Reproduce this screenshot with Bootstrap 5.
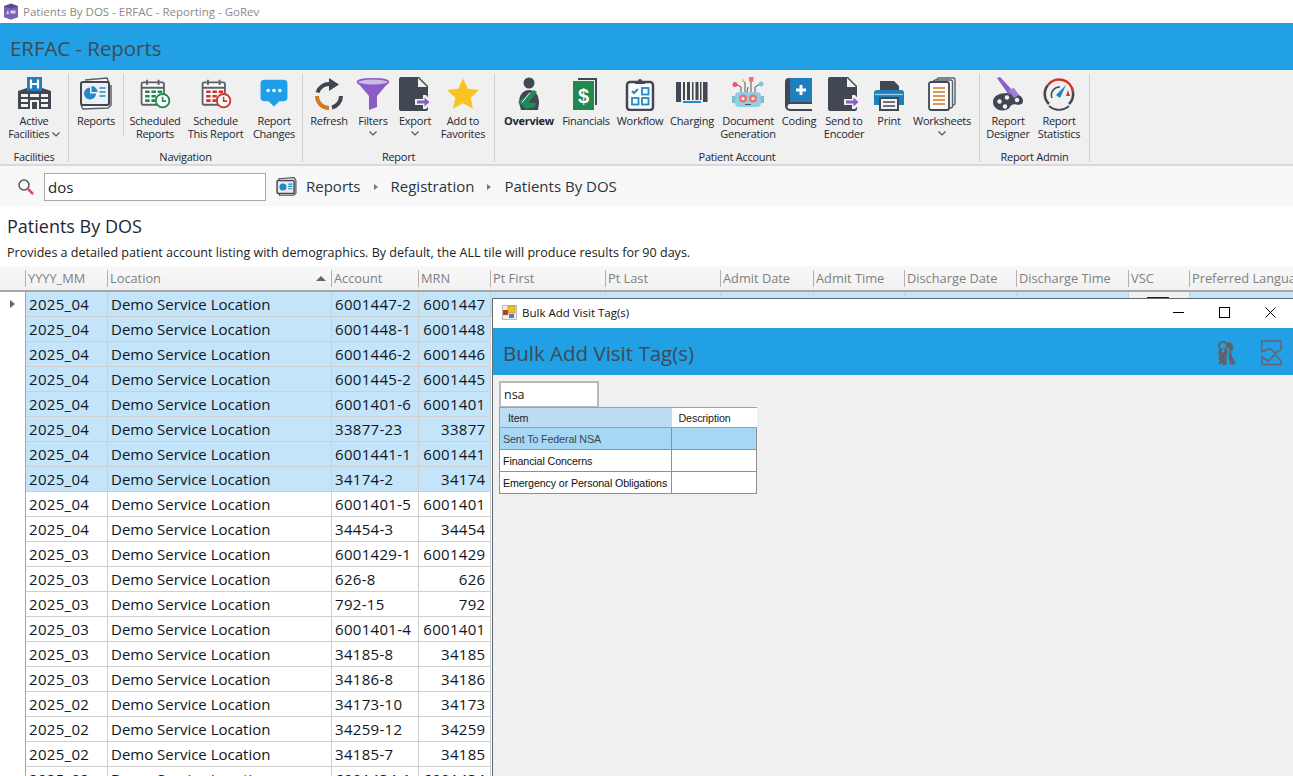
<!DOCTYPE html>
<html lang="en">
<head>
<meta charset="utf-8">
<title>Patients By DOS - ERFAC - Reporting - GoRev</title>
<link rel="stylesheet" href="https://cdn.jsdelivr.net/npm/bootstrap@5.3.0/dist/css/bootstrap.min.css">
<style>
html,body{height:776px;overflow:hidden}
body{font-family:"Open Sans","Noto Sans",sans-serif;background:#fff;color:#000;position:relative;width:1293px}
.wintitle{height:23px;font-size:11.5px;color:#8a8a8a;padding-left:3px;gap:4px}
.apphead{height:47px;background:#22a0e6;color:#3f4a54;font-size:20.4px;padding:4px 0 0 10px}
.ribbon{height:96px;background:#f0f0f0;border-bottom:2px solid #d9d9d9;font-size:11px;letter-spacing:-.25px;color:#1c2733;line-height:13px}
.rgroup{height:88px;margin-top:4px;border-right:1px solid #d0d0d0;position:relative}
.rbtns{height:76px}
.rlabel{text-align:center;height:12px;color:#1c2733}
.g3 .rlabel,.g5 .rlabel{margin-left:-3px}
.g4 .rlabel{margin-left:-5px}
.rbtn{text-align:center;padding-top:3px;flex:none}
.rbtn svg{display:block;margin:0 auto 3px;width:34px;height:34px}
.rbtn svg.chev{display:block;margin:4px auto 0;width:8px;height:5px}
.rbtn svg.chevin{display:inline;margin:0;width:8px;height:5px;vertical-align:1px}
.rsplit{border-right:1px solid #d0d0d0;height:62px;flex:none}
.g1{width:69px}.g2{width:234px}.g3{width:192px}.g4{width:485px}.g5{width:110px}
.pl3px{padding-left:3px}.pl5px{padding-left:5px}
.w42{width:42px}.w46{width:46px}.w48{width:48px}.w50{width:50px}.w52{width:52px}.w54{width:54px}.w56{width:56px}.w58{width:58px}.w59{width:59px}.w60{width:60px}.w62{width:62px}.w64{width:64px}.w68{width:68px}
.searchbar{height:40px;background:#f8f8f8;font-size:15px;color:#2a3440;padding:1px 0 0 17px}
.searchbox{width:222px;height:28px;border:1px solid #a9a9a9;background:#fff;padding:2px 3px 0;font-size:15px;margin-left:9px;margin-right:10px;color:#1c2733}
.crumb-sep{width:0;height:0;border-left:4px solid #777;border-top:3px solid transparent;border-bottom:3px solid transparent;margin:0 13px}
.crumbtext{margin-left:9px}
.pagehead{padding:8px 0 0 7px;height:60px;background:#fff}
.pagetitle{font-size:18px;line-height:24px;color:#1c2733}
.pagedesc{font-size:12.55px;line-height:16px;margin-top:7px;color:#222}
.gridwrap{width:1293px;overflow:hidden;flex:1 1 auto;min-height:0}
.dgrid{table-layout:fixed;width:1320px;border-collapse:collapse;margin:0;font-size:15px;--bs-table-bg:transparent}
.dgrid th{height:25px;background:linear-gradient(#f9f9f9,#f1f1f1);color:#808080;font-weight:400;font-size:12.8px;padding:1px 3px 0;border:0;border-bottom:2px solid #a5a5a5;position:relative;white-space:nowrap;overflow:hidden;vertical-align:middle}
.dgrid th::before{content:"";position:absolute;left:0;top:4px;bottom:3px;width:1px;background:#b0b0b0}
.dgrid th.corner::before{display:none}
.dgrid td{height:25px;padding:0 4px 0 3.5px;border:0;border-right:1px solid #cfcfcf;border-bottom:1px solid #cfcfcf;background:#fff;color:#10161c;white-space:nowrap;overflow:hidden;line-height:24px;vertical-align:middle}
.dgrid td:nth-child(2),.dgrid td:nth-child(4),.dgrid td:nth-child(5){letter-spacing:.3px}
.dgrid td.rowhead{border:0;background:#fff;border-right:1px solid #a5a5a5;padding:0;position:relative}
.dgrid tr.picked td{background:#c3e4f9}
.dgrid tr.picked td.rowhead{background:#fff}
.dgrid td.num{text-align:right}
.rowmark{display:block;width:0;height:0;border-left:5px solid #666;border-top:4px solid transparent;border-bottom:4px solid transparent;margin-left:10px}
.sortmark{position:absolute;right:5px;top:10px;width:0;height:0;border-bottom:5px solid #666;border-left:5px solid transparent;border-right:5px solid transparent}
.vscbox{display:block;width:22px;height:18px;border:1px solid #222;background:#fff;margin:3px auto 0}
.dgrid tr.picked td.vsc{background:#f0f0f0}
.c0{width:25px}.c1{width:82px}.c2{width:224px}.c3{width:87px}.c4{width:72px}.c5{width:115px}.c6{width:115px}.c7{width:93px}.c8{width:91px}.c9{width:112px}.c10{width:112px}.c11{width:61px}.c12{width:131px}
.dlg{position:absolute;left:492px;top:298px;width:801px;height:478px;background:#f0f0f0;border:1px solid #5c6b75;border-right:0;border-bottom:0;z-index:5}
.dlgtitle{height:29px;background:#fff;font-size:11.5px;color:#111;padding:0 0 2px 9px}
.dlgname{margin-left:5px}
.wbtn{width:46px;height:27px;flex:none}
.dlghead{height:47px;background:#22a0e6;color:#3f4a54;font-size:20.5px;padding:3px 0 0 10px}
.keyico{margin-right:25px}
.chartico{margin-right:11px}
.dlginput{width:100px;height:26px;border:2px solid #b9b9b9;border-bottom-width:1px;background:#fff;font-size:12.5px;padding:0 3px;margin:6px 0 0 6px;line-height:24px;color:#222}
.tagtable{margin:0 0 0 6px;width:258px;table-layout:fixed;border-collapse:collapse;font-family:"Liberation Sans",Arial,sans-serif;font-size:10.7px;letter-spacing:-.12px;--bs-table-bg:transparent}
.tagtable th{height:20px;background:#fff;font-weight:400;color:#222;padding:1px 7px 0;border:1px solid #a0a0a0;border-left:0;border-right:0;vertical-align:middle}
.tagtable th.hot{background:#bcdcf3;padding-left:8px;border-left:1px solid #a0a0a0}
.tagtable td{height:22px;padding:1px 3px 0;background:#fff;border:1px solid #909090;color:#111;vertical-align:middle;white-space:nowrap;overflow:hidden}
.tagtable tr.sel td{background:#a6d8f5;color:#3a4650}
.tc1{width:172px}.tc2{width:85px}
</style>
</head>
<body>
<div class="d-flex flex-column" id="page">
  <div class="wintitle d-flex align-items-center">
    <svg width="16" height="17" viewBox="0 0 16 17"><path d="M1 3l7-2.500L15 3v11l-7 2.500L1 14z" fill="#5d4a8e"/><path d="M1 3.500l7 2 7-2V14l-7 2.500L1 14z" fill="#7b62b4"/><path d="M3 11l2-4 1 4z" fill="#d8cdf0"/><rect x="7.500" y="7.500" width="5" height="3" fill="#d8cdf0"/></svg>
    <span>Patients By DOS - ERFAC - Reporting - GoRev</span>
  </div>
  <div class="apphead d-flex align-items-center">ERFAC - Reports</div>

  <div class="ribbon d-flex">
    <div class="rgroup g1">
      <div class="rbtns d-flex">
        <div class="rbtn w68">
          <svg viewBox="0 0 34 34"><rect x="10" y="0" width="15" height="14" fill="#1f7fbd"/><path d="M14 2.500v9M21 2.500v9M14 7h7" stroke="#fff" stroke-width="2.200"/><path d="M1 14l9-3v3h15v-3l9 3v18H1z" fill="#414852"/><path d="M4 17h7v3H4zM13 17h9v3h-9zM24 17h7v3h-7zM4 22h7v3H4zM24 22h7v3h-7zM4 27h7v3H4zM24 27h7v3h-7z" fill="#f4f4f4"/><rect x="13" y="23" width="9" height="9" fill="#f4f4f4"/><rect x="15" y="25" width="5" height="7" fill="#414852"/></svg>
          Active<br>Facilities <svg class="chevin" viewBox="0 0 8 5"><path d="M.5.500 4 4 7.500.500" fill="none" stroke="#555" stroke-width="1.200"/></svg>
        </div>
      </div>
      <div class="rlabel">Facilities</div>
    </div>

    <div class="rgroup g2">
      <div class="rbtns d-flex">
        <div class="rbtn w54">
          <svg viewBox="0 0 34 34"><path d="M6 3l22-2 2 5M2 28l2 4 25-1 3-3V8" fill="#f7f7f7" stroke="#5a6068" stroke-width="1.500"/><rect x="2" y="5" width="28" height="23" rx="2" fill="#eef1f3" stroke="#414852" stroke-width="2"/><path d="M11 10.500a6 6 0 1 0 6 6h-6z" fill="#2389c9"/><path d="M12.500 9a6 6 0 0 1 6 6h-6z" fill="#2389c9"/><path d="M20.500 11h6M20.500 15h6M20.500 19h6" stroke="#2389c9" stroke-width="1.600"/></svg>
          Reports
        </div>
        <div class="rsplit"></div>
        <div class="rbtn w62">
          <svg viewBox="-2 -1 38 38"><rect x="2" y="5" width="25" height="25" rx="2" fill="#fbfbfb" stroke="#5a6068" stroke-width="2"/><path d="M2 11h25M8 2v6M21 2v6" stroke="#5a6068" stroke-width="2"/><path d="M6 14h5v3H6zM13 14h5v3h-5zM20 14h5v3h-5zM6 19h5v3H6zM13 19h5v3h-5zM6 24h5v3H6zM13 24h5v3h-5z" fill="#1f8a4f"/><circle cx="25.500" cy="25.500" r="7.500" fill="#fff" stroke="#1f8a4f" stroke-width="2"/><path d="M25.500 21v5h4" fill="none" stroke="#1f8a4f" stroke-width="1.800"/></svg>
          Scheduled<br>Reports
        </div>
        <div class="rbtn w59">
          <svg viewBox="-2 -1 38 38"><rect x="2" y="5" width="25" height="25" rx="2" fill="#fbfbfb" stroke="#5a6068" stroke-width="2"/><path d="M2 11h25M8 2v6M21 2v6" stroke="#5a6068" stroke-width="2"/><path d="M6 14h5v3H6zM13 14h5v3h-5zM20 14h5v3h-5zM6 19h5v3H6zM13 19h5v3h-5zM6 24h5v3H6zM13 24h5v3h-5z" fill="#d0342c"/><circle cx="25.500" cy="25.500" r="7.500" fill="#fff" stroke="#d0342c" stroke-width="2"/><path d="M25.500 21v5h4" fill="none" stroke="#d0342c" stroke-width="1.800"/></svg>
          Schedule<br>This Report
        </div>
        <div class="rbtn w58">
          <svg viewBox="-2 -1 38 38"><path d="M6 2h22a4 4 0 0 1 4 4v16a4 4 0 0 1-4 4h-5l-6 6-6-6H6a4 4 0 0 1-4-4V6a4 4 0 0 1 4-4z" fill="#1f9fe8"/><circle cx="10.500" cy="14" r="2" fill="#fff"/><circle cx="17" cy="14" r="2" fill="#fff"/><circle cx="23.500" cy="14" r="2" fill="#fff"/></svg>
          Report<br>Changes
        </div>
      </div>
      <div class="rlabel">Navigation</div>
    </div>

    <div class="rgroup g3 pl3px">
      <div class="rbtns d-flex">
        <div class="rbtn w46">
          <svg viewBox="0 0 34 34"><path d="M29 19A12 12 0 0 1 20 30.600" fill="none" stroke="#3f4650" stroke-width="4"/><path d="M17 31A12 12 0 0 1 5 19" fill="none" stroke="#d17a22" stroke-width="4"/><path d="M5.500 15.500A12 12 0 0 1 18 7" fill="none" stroke="#3f4650" stroke-width="4"/><path d="M17 1l10 6.500L17 14z" fill="#3f4650"/></svg>
          Refresh
        </div>
        <div class="rbtn w42">
          <svg viewBox="0 0 34 34"><path d="M1 5l12 14v14l8-3V19L33 5z" fill="#8a5dc4"/><ellipse cx="17" cy="5" rx="15.500" ry="3.200" fill="#cdbbe6" stroke="#8a5dc4" stroke-width="1.500"/></svg>
          Filters
          <svg class="chev" viewBox="0 0 8 5"><path d="M.5.500 4 4 7.500.500" fill="none" stroke="#555" stroke-width="1.200"/></svg>
        </div>
        <div class="rbtn w42">
          <svg viewBox="0 0 34 34"><path d="M3 0h18l9 9v23a2 2 0 0 1-2 2H3a2 2 0 0 1-2-2V2a2 2 0 0 1 2-2z" fill="#414852"/><path d="M20 1v9h9z" fill="#f0f0f0"/><path d="M17 22h8v-4h3l6 7-6 7h-3v-4h-8z" fill="#f0f0f0"/><path d="M19 23.500h7.500v-3l5 4.500-5 4.500v-3H19z" fill="#8a5dc4"/></svg>
          Export
          <svg class="chev" viewBox="0 0 8 5"><path d="M.5.500 4 4 7.500.500" fill="none" stroke="#555" stroke-width="1.200"/></svg>
        </div>
        <div class="rbtn w54">
          <svg viewBox="0 0 34 34"><path d="M17 1.500l4.800 10.300 11.200 1.300-8.300 7.600 2.300 11.100L17 26.200 7 31.800l2.300-11.100L1 13.100l11.200-1.300z" fill="#f9c322"/></svg>
          Add to<br>Favorites
        </div>
      </div>
      <div class="rlabel">Report</div>
    </div>

    <div class="rgroup g4 pl5px">
      <div class="rbtns d-flex">
        <div class="rbtn w58 fw-bold">
          <svg viewBox="0 0 34 34"><circle cx="17" cy="6" r="5.500" fill="#414852"/><path d="M9 33l-2-7c0-8 4-13 10-13s10 5 10 13l-1 7z" fill="#414852"/><path d="M22 13l3 2-11 14-8-4z" fill="#1f8a5a"/><path d="M7 25l17 1-1 4-9 2z" fill="#1f8a5a"/><path d="M10 25.500l8-10" stroke="#f0f0f0" stroke-width="1"/></svg>
          Overview
        </div>
        <div class="rbtn w56">
          <svg viewBox="0 0 34 34"><path d="M9 2h18v26" fill="none" stroke="#414852" stroke-width="2"/><rect x="4" y="4" width="21" height="29" fill="#1f8a4f"/><text x="14.500" y="26" text-anchor="middle" font-size="20" font-family="Liberation Sans" font-weight="700" fill="#fff">$</text></svg>
          Financials
        </div>
        <div class="rbtn w52">
          <svg viewBox="0 0 34 34"><rect x="4" y="5" width="26" height="28" rx="3" fill="#fbfbfb" stroke="#414852" stroke-width="2.500"/><path d="M12 7V4h3a2 2 0 0 1 4 0h3v3z" fill="#414852"/><path d="M9 14l2 2 4-4" fill="none" stroke="#2389c9" stroke-width="2"/><rect x="19" y="11" width="6.500" height="6.500" fill="none" stroke="#2389c9" stroke-width="1.800"/><rect x="9" y="21" width="6.500" height="6.500" fill="none" stroke="#2389c9" stroke-width="1.800"/><rect x="19" y="21" width="6.500" height="6.500" fill="none" stroke="#2389c9" stroke-width="1.800"/></svg>
          Workflow
        </div>
        <div class="rbtn w52">
          <svg viewBox="0 0 34 34"><path d="M1 5h5v20H1zM8 5h2v18H8zM12 5h3v18h-3zM17 5h1.500v18H17zM20.500 5h3v18h-3zM25 5h1.500v18H25zM28 5h4.500v20H28z" fill="#414852"/><rect x="8" y="24" width="18" height="2" fill="#2389c9"/></svg>
          Charging
        </div>
        <div class="rbtn w60">
          <svg viewBox="0 0 34 34"><rect x="4" y="15" width="26" height="15" rx="4" fill="#8fd0e6"/><rect x="1" y="19" width="3" height="7" fill="#7cbcd3"/><rect x="30" y="19" width="3" height="7" fill="#7cbcd3"/><circle cx="12" cy="21.500" r="4" fill="#f0706a"/><circle cx="22" cy="21.500" r="4" fill="#f0706a"/><circle cx="12" cy="21.500" r="1.500" fill="#fff"/><circle cx="22" cy="21.500" r="1.500" fill="#fff"/><rect x="14" y="27" width="6" height="1" fill="#555"/><path d="M5 7l5 3v5M14 5v10M17 10l-1 5M20 3v12M29 7l-5 3v5" fill="none" stroke="#555" stroke-width="1"/><circle cx="4" cy="7.500" r="2.500" fill="#e8586a"/><path d="M12 1l2 4h-3z" fill="#f5b72a"/><rect x="18" y="0" width="4.500" height="4.500" fill="#f0706a"/><circle cx="30" cy="7" r="2.500" fill="#7cc7dd"/></svg>
          Document<br>Generation
        </div>
        <div class="rbtn w42">
          <svg viewBox="0 0 34 34"><path d="M7 1h23v26H8a2.500 2.500 0 0 0 0 5h22v2H8a5 5 0 0 1-5-5V5a4 4 0 0 1 4-4z" fill="#414852"/><rect x="8" y="1" width="22" height="24" fill="#1f7fbd"/><path d="M19 8v10M14 13h10" stroke="#fff" stroke-width="3"/></svg>
          Coding
        </div>
        <div class="rbtn w48">
          <svg viewBox="0 0 34 34"><path d="M3 0h18l9 9v23a2 2 0 0 1-2 2H3a2 2 0 0 1-2-2V2a2 2 0 0 1 2-2z" fill="#414852"/><path d="M20 1v9h9z" fill="#f0f0f0"/><path d="M17 22h8v-4h3l6 7-6 7h-3v-4h-8z" fill="#f0f0f0"/><path d="M19 23.500h7.500v-3l5 4.500-5 4.500v-3H19z" fill="#8a5dc4"/></svg>
          Send to<br>Encoder
        </div>
        <div class="rbtn w42">
          <svg viewBox="0 0 34 34"><path d="M8 4h14l5 5v5H8z" fill="#414852"/><path d="M5 13h24a3 3 0 0 1 3 3v12H2V16a3 3 0 0 1 3-3z" fill="#1f7fbd"/><rect x="8" y="21" width="18" height="12" fill="#f4f4f4" stroke="#414852" stroke-width="2"/><path d="M11 25h12M11 29h12" stroke="#414852" stroke-width="1.500"/><path d="M3 17.500h28" stroke="#9fd2ef" stroke-width="1.200"/></svg>
          Print
        </div>
        <div class="rbtn w64">
          <svg viewBox="0 0 34 34"><rect x="12" y="1" width="18" height="27" rx="2" fill="#f4f4f4" stroke="#5a6068" stroke-width="1.400"/><rect x="8.500" y="3" width="19" height="28" rx="2" fill="#f4f4f4" stroke="#5a6068" stroke-width="1.400"/><rect x="4" y="5" width="20" height="28" rx="2" fill="#fbfbfb" stroke="#414852" stroke-width="1.800"/><path d="M8 11h12M8 15h12M8 19h12M8 23h12M8 27h12" stroke="#d17a22" stroke-width="1.700"/></svg>
          Worksheets
          <svg class="chev" viewBox="0 0 8 5"><path d="M.5.500 4 4 7.500.500" fill="none" stroke="#555" stroke-width="1.200"/></svg>
        </div>
      </div>
      <div class="rlabel">Patient Account</div>
    </div>

    <div class="rgroup g5 pl3px">
      <div class="rbtns d-flex">
        <div class="rbtn w50">
          <svg viewBox="0 0 34 34"><path d="M2 25c0-6 6-9 14-9s16 2 16 8c0 4-4 4-7 3.500s-5 .5-6 2.500-4 3.500-8 3.500-9-3-9-8.500z" fill="#414852"/><circle cx="8.500" cy="24.500" r="2.200" fill="#f4f4f4"/><circle cx="16" cy="20.500" r="2.200" fill="#f4f4f4"/><circle cx="14" cy="29.500" r="2.200" fill="#f4f4f4"/><circle cx="26" cy="23" r="2.200" fill="#f4f4f4"/><path d="M6 1l3-1 13 14-4 4z" fill="#8a5dc4"/><path d="M17 13l6-2 5 7-5 3z" fill="#9c7fd6"/></svg>
          Report<br>Designer
        </div>
        <div class="rbtn w52">
          <svg viewBox="0 0 34 34"><path d="M7 27A14 14 0 0 1 6 8" fill="none" stroke="#414852" stroke-width="2.600"/><path d="M6 8A14 14 0 0 1 31 15" fill="none" stroke="#d0342c" stroke-width="2.600"/><path d="M31 15A14 14 0 0 1 27 27" fill="none" stroke="#414852" stroke-width="2.600"/><path d="M27 29A15 15 0 0 1 7 29" fill="none" stroke="#414852" stroke-width="1.800"/><path d="M10 21a8 8 0 0 1 8-11" fill="none" stroke="#414852" stroke-width="1.500"/><path d="M14 18l10-10-6 13z" fill="#1f7fbd"/><path d="M26 13l2 6h-4z" fill="#d0342c"/></svg>
          Report<br>Statistics
        </div>
      </div>
      <div class="rlabel">Report Admin</div>
    </div>
  </div>

  <div class="searchbar d-flex align-items-center">
    <svg width="18" height="18" viewBox="0 0 18 18"><circle cx="7" cy="7" r="5" fill="#fbfbfb" stroke="#555" stroke-width="1.500"/><path d="M11 11l5 5" stroke="#d84a6a" stroke-width="2.500"/></svg>
    <div class="searchbox d-flex align-items-center">dos</div>
    <svg width="21" height="20" viewBox="0 0 34 34"><path d="M4 3l26-2 3 5v22l-4 3H5z" fill="#fff" stroke="#4a5058" stroke-width="2"/><rect x="1" y="6" width="29" height="22" rx="2" fill="#e9edf0" stroke="#414852" stroke-width="2.500"/><circle cx="11" cy="17" r="6" fill="#2389c9"/><path d="M20 12h7M20 16h7M20 20h7" stroke="#2389c9" stroke-width="2"/></svg>
    <div class="d-flex align-items-center crumbtext">
      <span>Reports</span><span class="crumb-sep"></span><span>Registration</span><span class="crumb-sep"></span><span>Patients By DOS</span>
    </div>
  </div>

  <div class="pagehead">
    <div class="pagetitle">Patients By DOS</div>
    <div class="pagedesc">Provides a detailed patient account listing with demographics. By default, the ALL tile will produce results for 90 days.</div>
  </div>

  <div class="gridwrap">
    <table class="table dgrid">
      <colgroup><col class="c0"><col class="c1"><col class="c2"><col class="c3"><col class="c4"><col class="c5"><col class="c6"><col class="c7"><col class="c8"><col class="c9"><col class="c10"><col class="c11"><col class="c12"></colgroup>
      <thead><tr><th class="corner"></th><th>YYYY_MM</th><th>Location<span class="sortmark"></span></th><th>Account</th><th>MRN</th><th>Pt First</th><th>Pt Last</th><th>Admit Date</th><th>Admit Time</th><th>Discharge Date</th><th>Discharge Time</th><th>VSC</th><th>Preferred Language</th></tr></thead>
      <tbody>
        <tr class="picked"><td class="rowhead"><span class="rowmark"></span></td><td>2025_04</td><td>Demo Service Location</td><td>6001447-2</td><td class="num">6001447</td><td></td><td></td><td></td><td></td><td></td><td></td><td class="vsc"><span class="vscbox"></span></td><td></td></tr>
        <tr class="picked"><td class="rowhead"></td><td>2025_04</td><td>Demo Service Location</td><td>6001448-1</td><td class="num">6001448</td></tr>
        <tr class="picked"><td class="rowhead"></td><td>2025_04</td><td>Demo Service Location</td><td>6001446-2</td><td class="num">6001446</td></tr>
        <tr class="picked"><td class="rowhead"></td><td>2025_04</td><td>Demo Service Location</td><td>6001445-2</td><td class="num">6001445</td></tr>
        <tr class="picked"><td class="rowhead"></td><td>2025_04</td><td>Demo Service Location</td><td>6001401-6</td><td class="num">6001401</td></tr>
        <tr class="picked"><td class="rowhead"></td><td>2025_04</td><td>Demo Service Location</td><td>33877-23</td><td class="num">33877</td></tr>
        <tr class="picked"><td class="rowhead"></td><td>2025_04</td><td>Demo Service Location</td><td>6001441-1</td><td class="num">6001441</td></tr>
        <tr class="picked"><td class="rowhead"></td><td>2025_04</td><td>Demo Service Location</td><td>34174-2</td><td class="num">34174</td></tr>
        <tr><td class="rowhead"></td><td>2025_04</td><td>Demo Service Location</td><td>6001401-5</td><td class="num">6001401</td></tr>
        <tr><td class="rowhead"></td><td>2025_04</td><td>Demo Service Location</td><td>34454-3</td><td class="num">34454</td></tr>
        <tr><td class="rowhead"></td><td>2025_03</td><td>Demo Service Location</td><td>6001429-1</td><td class="num">6001429</td></tr>
        <tr><td class="rowhead"></td><td>2025_03</td><td>Demo Service Location</td><td>626-8</td><td class="num">626</td></tr>
        <tr><td class="rowhead"></td><td>2025_03</td><td>Demo Service Location</td><td>792-15</td><td class="num">792</td></tr>
        <tr><td class="rowhead"></td><td>2025_03</td><td>Demo Service Location</td><td>6001401-4</td><td class="num">6001401</td></tr>
        <tr><td class="rowhead"></td><td>2025_03</td><td>Demo Service Location</td><td>34185-8</td><td class="num">34185</td></tr>
        <tr><td class="rowhead"></td><td>2025_03</td><td>Demo Service Location</td><td>34186-8</td><td class="num">34186</td></tr>
        <tr><td class="rowhead"></td><td>2025_02</td><td>Demo Service Location</td><td>34173-10</td><td class="num">34173</td></tr>
        <tr><td class="rowhead"></td><td>2025_02</td><td>Demo Service Location</td><td>34259-12</td><td class="num">34259</td></tr>
        <tr><td class="rowhead"></td><td>2025_02</td><td>Demo Service Location</td><td>34185-7</td><td class="num">34185</td></tr>
        <tr><td class="rowhead"></td><td>2025_02</td><td>Demo Service Location</td><td>6001434-1</td><td class="num">6001434</td></tr>
      </tbody>
    </table>
  </div>
</div>

<div class="dlg">
  <div class="dlgtitle d-flex align-items-center">
    <svg width="15" height="15" viewBox="0 0 15 15"><rect x=".5" y=".5" width="14" height="14" fill="#eee" stroke="#bbb"/><rect x="1" y="5" width="5" height="5" fill="#c0392b"/><rect x="6" y="1" width="7" height="7" fill="#f0c030" stroke="#a98a20" stroke-width=".6"/><rect x="7" y="9" width="5" height="4" fill="#4a7fd0"/></svg>
    <span class="flex-grow-1 dlgname">Bulk Add Visit Tag(s)</span>
    <div class="wbtn d-flex align-items-center justify-content-center"><svg width="11" height="11" viewBox="0 0 11 11"><path d="M0 5.500h11" stroke="#000"/></svg></div>
    <div class="wbtn d-flex align-items-center justify-content-center"><svg width="11" height="11" viewBox="0 0 11 11"><rect x=".5" y=".5" width="10" height="10" fill="none" stroke="#000"/></svg></div>
    <div class="wbtn d-flex align-items-center justify-content-center"><svg width="11" height="11" viewBox="0 0 11 11"><path d="M.5.500l10 10M10.500.500l-10 10" stroke="#000"/></svg></div>
  </div>
  <div class="dlghead d-flex align-items-center">
    <span class="flex-grow-1">Bulk Add Visit Tag(s)</span>
    <svg class="keyico" width="21" height="26" viewBox="0 0 21 26"><circle cx="8" cy="6" r="4" fill="none" stroke="#5f6368" stroke-width="2"/><path d="M3 12a5.500 5.500 0 0 1 10 0l-1.500 4v9H7.500l-1-2-2 1.500-1-2L5 21l-2-2 1.500-2z" fill="#5f6368"/><path d="M12 2.500a5 5 0 0 1 4 9l1 5 3.500 6-2 2.500-2-1.500-1.500 1.500-1.500-8 1-5.500z" fill="#5f6368"/><circle cx="8" cy="11" r="1.500" fill="#22a0e6"/></svg>
    <svg class="chartico" width="21" height="26" viewBox="0 0 21 26"><path d="M.7 12V1H20v8.500L14 13 9 8.500zM.7 17L7 21l7-6.500 6 6V24.500H.7z" fill="none" stroke="#755e68" stroke-width="1.500"/></svg>
  </div>
  <div class="dlginput">nsa</div>
  <table class="table tagtable">
    <colgroup><col class="tc1"><col class="tc2"></colgroup>
    <thead><tr><th class="hot">Item</th><th>Description</th></tr></thead>
    <tbody>
      <tr class="sel"><td>Sent To Federal NSA</td><td></td></tr>
      <tr><td>Financial Concerns</td><td></td></tr>
      <tr><td>Emergency or Personal Obligations</td><td></td></tr>
    </tbody>
  </table>
</div>
<script src="https://cdn.jsdelivr.net/npm/bootstrap@5.3.0/dist/js/bootstrap.bundle.min.js"></script>
</body>
</html>
